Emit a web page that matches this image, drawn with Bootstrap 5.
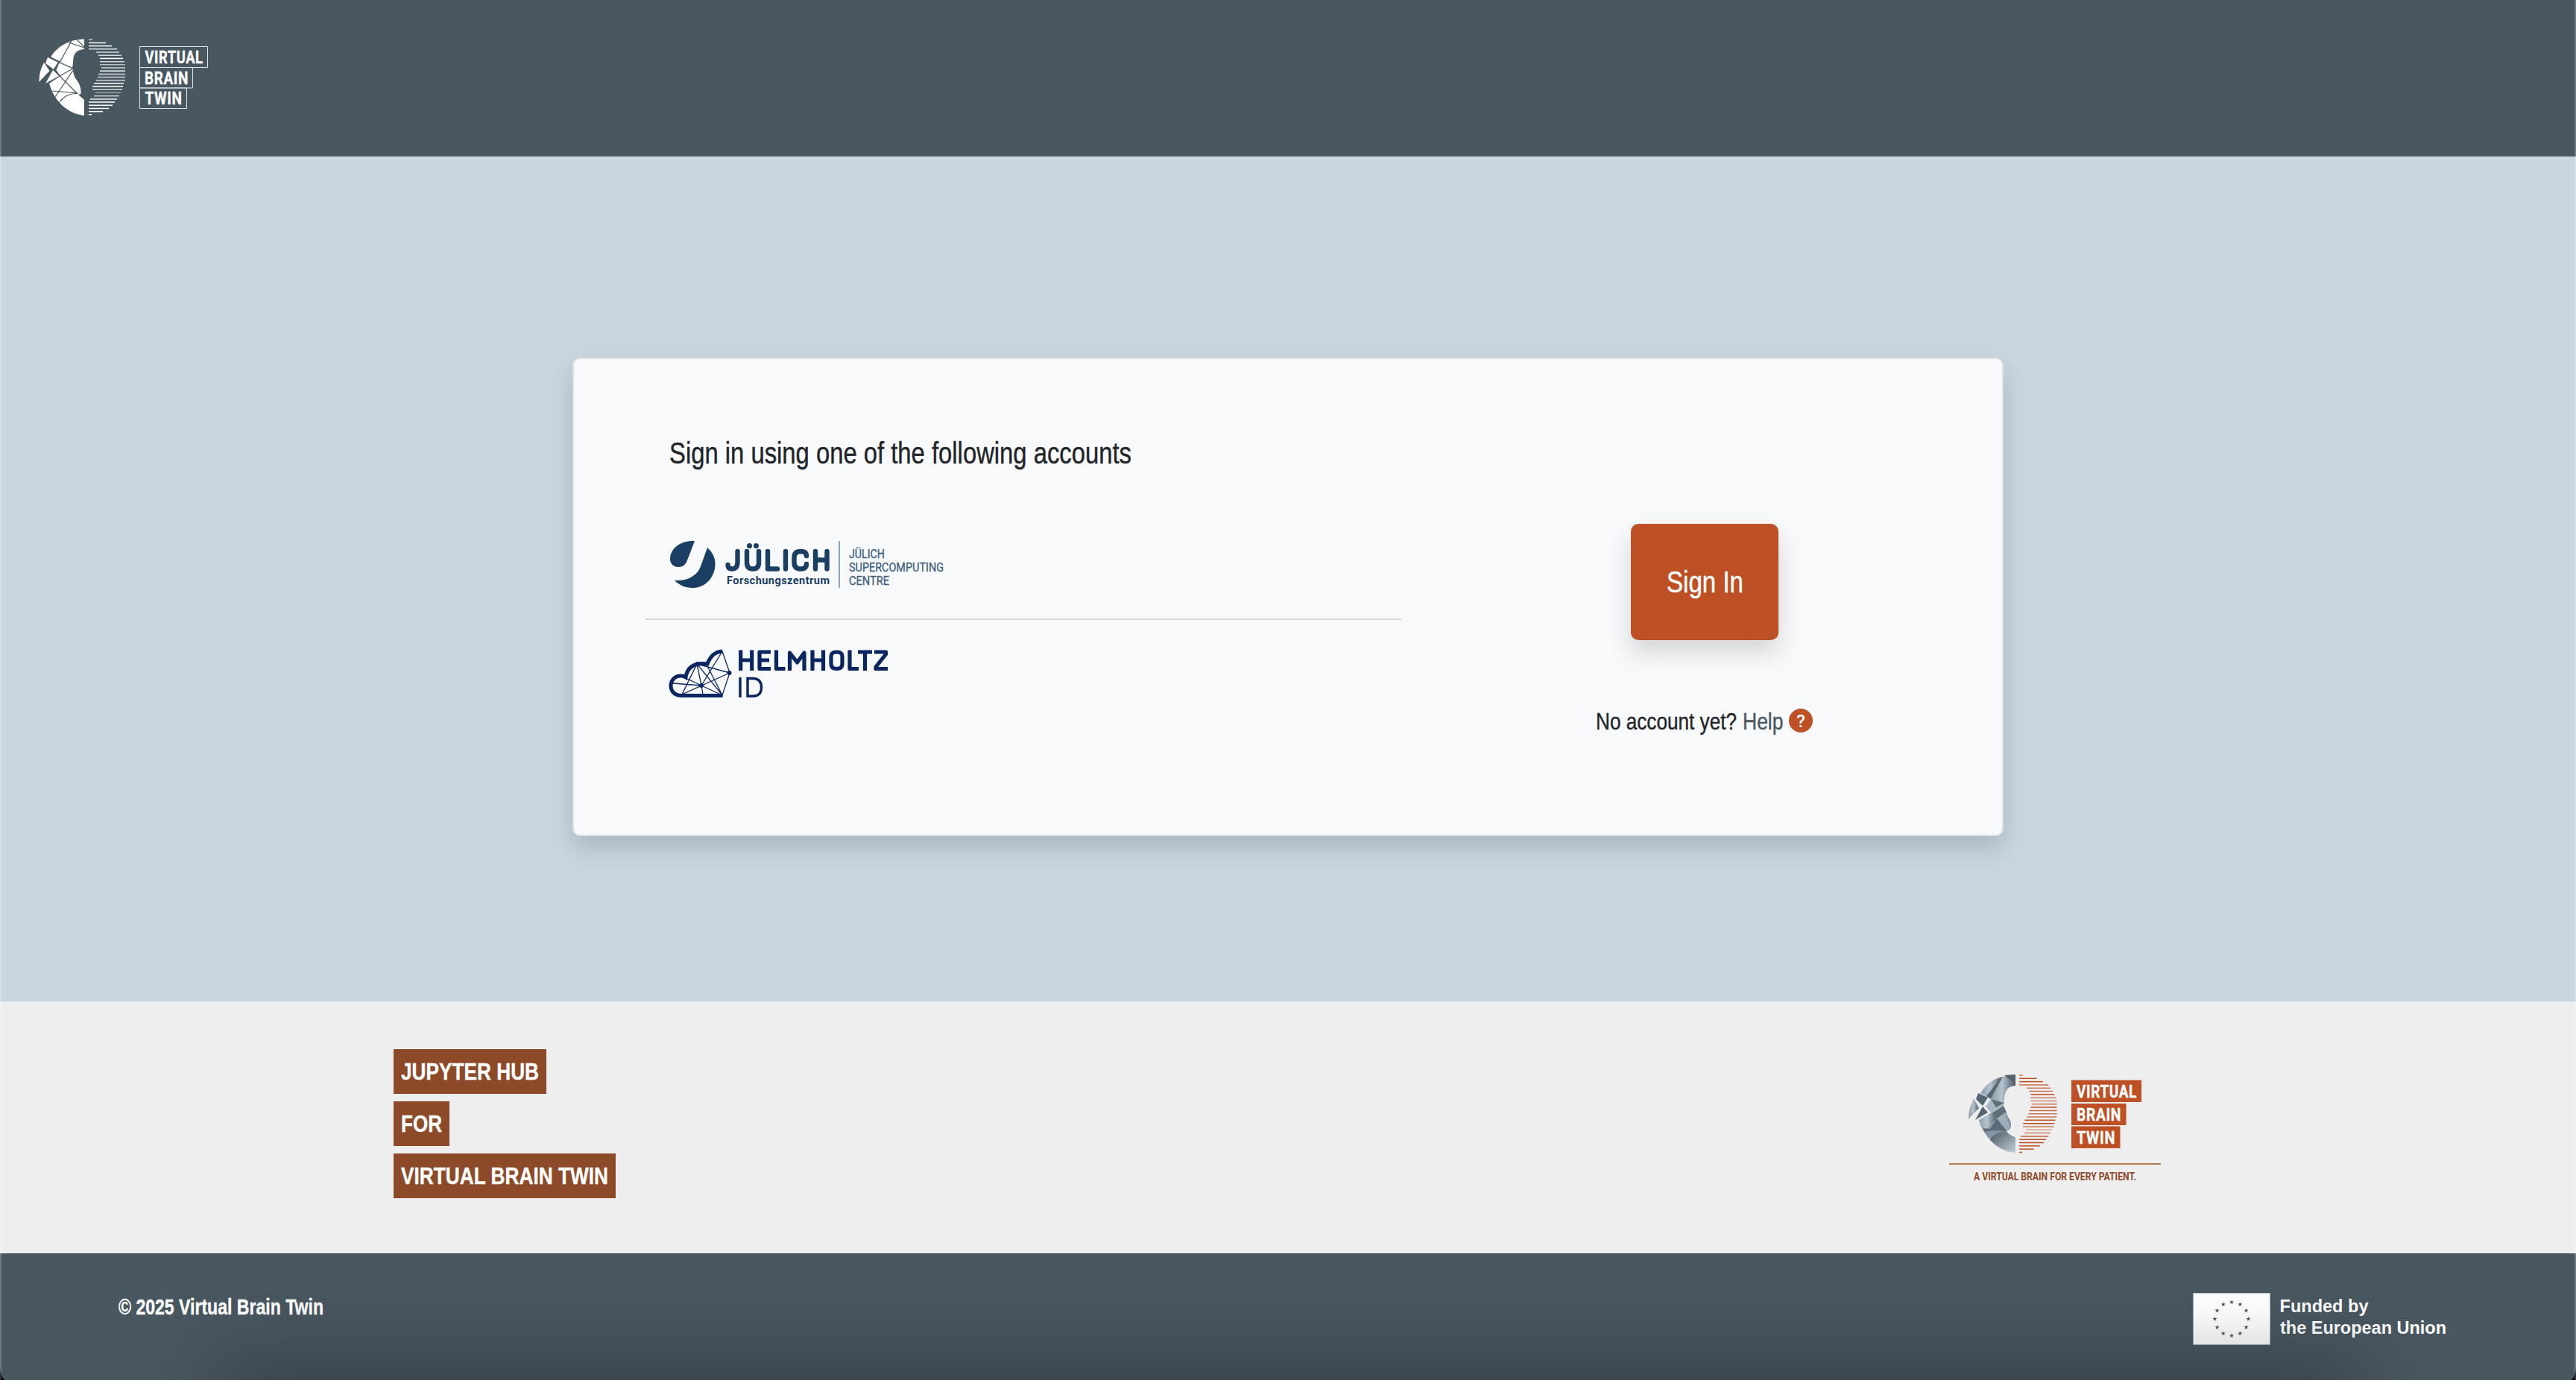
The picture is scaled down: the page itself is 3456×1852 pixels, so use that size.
<!DOCTYPE html>
<html lang="en">
<head>
<meta charset="utf-8">
<title>Virtual Brain Twin</title>
<link href="https://cdn.jsdelivr.net/npm/bootstrap@5.3.0/dist/css/bootstrap.min.css" rel="stylesheet">
<style>
html,body{height:100%}
body{font-family:"Liberation Sans",Arial,sans-serif;background:#c9d6df;color:#212529;overflow:hidden}
svg{display:block;flex:none;overflow:visible}
svg text{font-family:"Liberation Sans",Arial,sans-serif}
svg .din text,svg text.din{font-family:Roboto,sans-serif}
svg .logo-words text{font-family:Roboto,sans-serif;letter-spacing:.8px;stroke:#fff;stroke-width:.4px}
.ink{stroke:currentColor;stroke-width:.4px;fill:currentColor}
.page-shell{width:3456px;height:1852px;position:relative}
.top-bar{height:210px;background:#495761;padding:52px 0 0 52px}
.stage{height:1134px;padding-top:270px}
.login-card{width:1920px;height:642px;margin-left:768px;background:#f8f9fb;border:2px solid #dee3e8;border-radius:10px;box-shadow:0 16px 32px rgba(0,0,0,.15)}
.accounts{width:1112px;padding:103px 0 0 96px}
.accounts hr{margin:40px 0 0;border:0;height:2px;background:#212529;opacity:.16;width:1014px}
.account-item{padding-left:32px}
.item-first{padding-top:81px}
.item-second{padding-top:39px}
.signin-col{width:340px;margin-left:235px;padding-top:221px}
.btn-signin{width:198px;height:156px;border:0;padding:0;background:#be5025;border-radius:10px;box-shadow:0 16px 32px rgba(0,0,0,.15)}
.btn-signin:hover{background:#be5025}
.help-line{margin-top:93px}
.brand-strip{height:338px;background:#eee;padding:64px 555px 0 528px}
.tag-line{height:60px;background:#8d4a28;margin-bottom:10px;color:#fff}
.bottom-bar{height:170px;background:#495761;padding:52px 174px 0 160px}
.dock-shade{position:absolute;left:340px;right:340px;bottom:-80px;height:60px;box-shadow:0 0 100px 50px rgba(25,30,32,.34)}
.window-edge{position:absolute;inset:0;overflow:hidden;pointer-events:none}
.window-edge>svg{position:absolute;bottom:0}
.corner-right{right:0}
.window-edge::after{content:"";position:absolute;inset:0;border:solid rgba(255,255,255,.2);border-width:0 2px}
</style>
<script src="https://cdn.jsdelivr.net/npm/bootstrap@5.3.0/dist/js/bootstrap.bundle.min.js"></script>
</head>
<body>
<div class="page-shell d-flex flex-column">
<header class="top-bar d-flex">
<svg width="230" height="106" viewBox="52 52 230 106">
<g fill="#fff"><path d="M113 52.5C92 53 76 63 67.500 77.500L80 83L97 91L98 85C98 72 102 67 113 66Z"/><path d="M80 83L98 92C98 99 100 104 104 109C108 115 109 121 108.500 126L105 127L113 134V155C92 153 73 137 66 112L81 102L75.500 94Z"/><path d="M64 77L78 83L72 93L61 85ZM71 94L79 102L61 112Z"/><path d="M59 84L66.500 95L52.500 110C52.500 99 55 91 59 84Z"/></g>
<g fill="none" stroke="#495761" stroke-width="1.200"><path d="M97 53L80 84L98 92M92 57L113 64M103 53L113 63M98 92L80 102M80 102L104 126M70 122L104 125M74 130L99 93M105 125Q87 126 80 137"/><path d="M67 77L81 84" stroke-width="2"/></g>
<g id="rays"></g>
<g fill="none" stroke="#dfe3e5" stroke-width="1"><path d="M187.500 62.500H278.500V90.500H187.500ZM187.500 90.500H258.500V118H187.500ZM187.500 118H250.500V145.500H187.500Z"/></g>
<g class="logo-words" fill="#fff" font-weight="700" font-size="24"><text x="194.500" y="85" textLength="78" lengthAdjust="spacingAndGlyphs">VIRTUAL</text><text x="194" y="112.500" textLength="59" lengthAdjust="spacingAndGlyphs">BRAIN</text><text x="194.500" y="140" textLength="50" lengthAdjust="spacingAndGlyphs">TWIN</text></g>
</svg>
</header>
<main class="stage">
<div class="login-card d-flex">
<div class="accounts">
<div class="account-item"><svg width="700" height="60"><text class="ink" x="0" y="37" font-size="40" textLength="620" lengthAdjust="spacingAndGlyphs">Sign in using one of the following accounts</text></svg></div>
<div class="account-item item-first">
<svg width="370" height="64" viewBox="898 726 370 64">
<g fill="#1a3f63"><path d="M932 726C913 725 899 736 899 750C899 757 904 761 910 761C917 761 920 757 922 752Z"/><path d="M949 735C957 742 960 750 959.500 759C958 777 945 789 929 789C919 789 911 785 905 779C925 780 936 771 940 760Z"/></g>
<g fill="none" stroke="#1a3f63" stroke-width="6.400" stroke-linecap="round" stroke-linejoin="round"><path d="M989.500 740V754Q989.500 763.500 982 763.500Q976.500 763.500 976.500 758M1002 740V755Q1002 763.500 1010 763.500Q1018 763.500 1018 755V740M1030 740V763.500H1043M1054 740V763.500M1082 746Q1082 740 1074 740Q1065.500 740 1065.500 748V755Q1065.500 763.500 1074 763.500Q1082 763.500 1082 757M1094 740V763.500M1109.500 740V763.500M1094 751.500H1109.500"/></g>
<g fill="#1a3f63"><circle cx="1005.500" cy="732.500" r="3.500"/><circle cx="1014.500" cy="732.500" r="3.500"/></g>
<text class="din" x="975" y="784" font-size="14.500" font-weight="700" fill="#1a3f63" textLength="138">Forschungszentrum</text>
<path d="M1126 726V789" stroke="#93a5b8" stroke-width="2"/>
<g class="din" fill="#3c5d7c" stroke="#3c5d7c" stroke-width=".3" font-size="16.500"><text x="1139" y="749" textLength="48" lengthAdjust="spacingAndGlyphs">JÜLICH</text><text x="1139" y="767" textLength="127" lengthAdjust="spacingAndGlyphs">SUPERCOMPUTING</text><text x="1139" y="785" textLength="54" lengthAdjust="spacingAndGlyphs">CENTRE</text></g>
</svg></div>
<hr>
<div class="account-item item-second">
<svg width="300" height="66" viewBox="898 871 300 66">
<path d="M969.500 933.500H913C894 932 897 906 914 907Q917 907 920 909Q923 888 949 891Q955 875 969 874" fill="none" stroke="#0b2561" stroke-width="5"/>
<g fill="none" stroke="#0b2561" stroke-width="1.300"><path d="M969 874L979 903L969 933L935 891L979 903L915 932L935 891L941 920L969 874M941 920L903 917M941 920L920 910M941 920L915 932M941 920L943 932M941 920L969 933M948 892L969 933"/></g>
<circle cx="978.500" cy="903" r="3" fill="#0b2561"/><circle cx="941" cy="920" r="3" fill="#0b2561"/><circle cx="936" cy="891" r="3" fill="#0b2561"/>
<g fill="none" stroke="#0b2561" stroke-width="5.200" stroke-linejoin="round"><path d="M993.700 872.500V900M1008.700 872.500V900M993.700 886H1008.700M1034 875H1019V897.500H1034M1019 886H1032M1041.500 872.500V897.500H1053.500M1059.500 900V876L1069.500 889L1079 876V900M1090 872.500V900M1104.500 872.500V900M1090 886H1104.500M1115 881Q1115 875 1122.500 875Q1130 875 1130 881V891Q1130 897.500 1122.500 897.500Q1115 897.500 1115 891ZM1140 872.500V897.500H1152M1151 875H1170M1160.500 875V900M1173 875H1188.500V878L1175 895V897.500H1191"/></g>
<g fill="none" stroke="#0b2561" stroke-width="3.400"><path d="M993 909V936M1003 910.500V934.200H1010Q1021.500 934.200 1021.500 922.500Q1021.500 910.500 1010 910.500Z"/></g>
</svg></div>
</div>
<div class="signin-col d-flex flex-column align-items-center">
<button class="btn btn-signin text-white"><svg width="198" height="156"><text class="ink" x="48" y="92" font-size="40" textLength="103" lengthAdjust="spacingAndGlyphs">Sign In</text></svg></button>
<div class="help-line d-flex"><svg width="292" height="40" viewBox="2141 952 292 40"><g font-size="32"><text class="ink" x="2141" y="979" textLength="189" lengthAdjust="spacingAndGlyphs">No account yet?</text><text x="2338" y="979" fill="#495761" stroke="#495761" stroke-width=".4" textLength="54.500" lengthAdjust="spacingAndGlyphs">Help</text></g><circle cx="2416" cy="967" r="16" fill="#be5025"/><text class="din" x="2416" y="975.500" fill="#fff" font-size="24" font-weight="500" text-anchor="middle">?</text></svg></div>
</div>
</div>
</main>
<section class="brand-strip d-flex justify-content-between">
<div class="d-flex flex-column align-items-start">
<div class="tag-line"><svg width="205" height="60"><text class="ink" x="10" y="41" font-size="32" font-weight="700" textLength="185" lengthAdjust="spacingAndGlyphs">JUPYTER HUB</text></svg></div>
<div class="tag-line"><svg width="75" height="60"><text class="ink" x="10" y="41" font-size="32" font-weight="700" textLength="55" lengthAdjust="spacingAndGlyphs">FOR</text></svg></div>
<div class="tag-line"><svg width="298" height="60"><text class="ink" x="10" y="41" font-size="32" font-weight="700" textLength="278" lengthAdjust="spacingAndGlyphs">VIRTUAL BRAIN TWIN</text></svg></div>
</div>
<svg width="286" height="180" viewBox="2615 1408 286 180">
<defs><linearGradient id="steel" x2="1"><stop stop-color="#8c9ca8"/><stop offset=".45" stop-color="#b5c4cf"/><stop offset="1" stop-color="#4b5964"/></linearGradient><linearGradient id="steelDown" x2="1" y2="1"><stop stop-color="#46535e"/><stop offset="1" stop-color="#c3d0da"/></linearGradient></defs>
<path fill="url(#steel)" d="M2657 1467C2664 1455 2674 1448 2687 1445L2671 1475Z"/>
<path fill="#596975" d="M2687 1445L2671 1475L2665 1471L2682 1449Z"/>
<path fill="url(#steel)" d="M2687 1445L2704 1442V1457C2693 1458 2689 1464 2689 1480L2671 1475Z"/>
<path fill="#55636e" d="M2689 1443L2704 1442V1455Z"/>
<path fill="#a9b9c4" d="M2671 1475L2689 1480L2688 1484L2672 1494L2664 1485Z"/>
<path fill="#5f6f7a" d="M2671 1475L2689 1480L2678 1486ZM2672 1494L2688 1484L2692 1493L2679 1501Z"/>
<path fill="url(#steel)" d="M2655 1503L2672 1493L2679 1501L2662 1519C2659 1515 2656 1509 2655 1503Z"/>
<path fill="#8496a3" d="M2679 1501L2692 1493C2693 1500 2699 1503 2698 1511Q2698 1516 2692 1518L2668 1528L2662 1519Z"/>
<path fill="#5c6b77" d="M2679 1501L2692 1518L2673 1517L2662 1519L2660 1514L2670 1515Z"/>
<path fill="#b4c3ce" d="M2679 1501L2690 1493L2697 1514L2692 1517Z" opacity=".5"/>
<path fill="url(#steelDown)" d="M2669 1529Q2676 1520 2692 1518Q2696 1524 2704 1526V1547C2690 1546 2678 1539 2669 1529Z"/>
<path fill="#566570" d="M2654 1467L2667 1473L2660 1484L2651 1475ZM2660 1485L2667 1493L2650 1503Z"/><path fill="url(#steel)" d="M2648 1474L2655 1487L2641 1502Q2641 1487 2648 1474Z"/>
<g id="rays2"></g>
<g fill="#be5025"><path d="M2779 1449.500H2873V1479H2779ZM2779 1481H2852.500V1510H2779ZM2779 1511.500H2844.500V1541H2779Z"/></g>
<g class="logo-words" fill="#fff" font-weight="700" font-size="24"><text x="2786" y="1473" textLength="81" lengthAdjust="spacingAndGlyphs">VIRTUAL</text><text x="2786" y="1503.500" textLength="60" lengthAdjust="spacingAndGlyphs">BRAIN</text><text x="2786" y="1534.500" textLength="52" lengthAdjust="spacingAndGlyphs">TWIN</text></g>
<path d="M2615 1562H2899" stroke="#b47a52" stroke-width="2"/>
<text class="din" x="2648" y="1584" font-size="15" font-weight="700" fill="#8d4a28" textLength="218" lengthAdjust="spacingAndGlyphs">A VIRTUAL BRAIN FOR EVERY PATIENT.</text>
</svg>
</section>
<footer class="bottom-bar text-white d-flex justify-content-between">
<svg width="280" height="50"><text class="ink" x="-1" y="30" font-size="28.800" font-weight="700" textLength="275" lengthAdjust="spacingAndGlyphs">© 2025 Virtual Brain Twin</text></svg>
<svg width="340" height="72" viewBox="2942 1734 340 72"><path d="M2942.500 1735.500H3045.500V1804.500H2942.500Z" fill="#fff" stroke="#aab4bb"/><g id="stars" fill="#495761"></g><g font-size="23.500" font-weight="700" fill="#fff"><text x="3058.500" y="1761" textLength="119">Funded by</text><text x="3059" y="1790" textLength="223">the European Union</text></g></svg>
</footer>
<div class="window-edge"><div class="dock-shade"></div>
<svg width="16" height="18"><path d="M0 2Q1 13 6 18H0Z" fill="#000"/></svg>
<svg class="corner-right" width="16" height="18"><path d="M16 2Q15 13 10 18H16Z" fill="#000"/></svg>
</div>
</div>
<script>
// Right half of the brain mark: [left, right, opacity] per stripe, top to bottom.
const stripes=[[119,124,.7],[119,142,1],[119,150,1],[119,157,.8],[129,160,.75],[132,163,.75],[134,165,1],[134,167,.75],[134,168,.6],[136,168,.75],[134,168,1],[132,168,.8],[131,168,.75],[129,168,.75],[126,166,1],[124,165,1],[124,164,.7],[128,162,.45],[126,160,.7],[121,157,.9],[119,154,1],[119,151,1],[119,146,1],[119,138,1],[119,123,1]];
const rays=(id,x0,y0,k,step,color)=>{document.getElementById(id).innerHTML=stripes.map(([a,b,o],i)=>`<path d="M${x0+(a-119)*k} ${y0+i*step}H${x0+(b-119)*k}" stroke="${color}" stroke-width="1.5" opacity="${o}"/>`).join('')};
rays('rays',119,53.3,1,4.19,'#fff');
rays('rays2',2709,1443,1.03,4.31,'#be5025');
// Twelve upright stars on a ring.
document.getElementById('stars').innerHTML=Array.from({length:12},(_,i)=>{const t=i*Math.PI/6,cx=2994+22.5*Math.sin(t),cy=1770-22.5*Math.cos(t);let p='';for(let j=0;j<10;j++){const r=j%2?1.3:3.3,a=j*Math.PI/5;p+=(cx+r*Math.sin(a)).toFixed(2)+','+(cy-r*Math.cos(a)).toFixed(2)+' '}return `<polygon points="${p}"/>`}).join('');
</script>
</body>
</html>
